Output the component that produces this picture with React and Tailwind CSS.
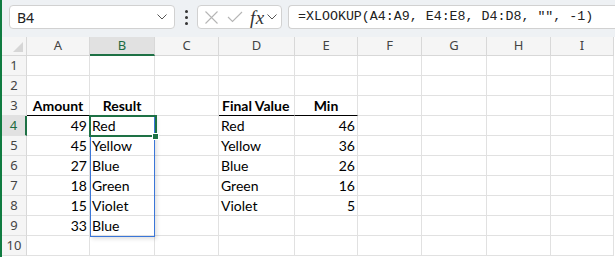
import React from 'react';

const cols = ['A', 'B', 'C', 'D', 'E', 'F', 'G', 'H', 'I'];

// row data keyed by column
const rows = {
  3: { A: 'Amount', B: 'Result', D: 'Final Value', E: 'Min' },
  4: { A: '49', B: 'Red', D: 'Red', E: '46' },
  5: { A: '45', B: 'Yellow', D: 'Yellow', E: '36' },
  6: { A: '27', B: 'Blue', D: 'Blue', E: '26' },
  7: { A: '18', B: 'Green', D: 'Green', E: '16' },
  8: { A: '15', B: 'Violet', D: 'Violet', E: '5' },
  9: { A: '33', B: 'Blue' },
};

const Chevron = ({ className }) => (
  <svg width="10" height="6" viewBox="0 0 10 6" className={className}>
    <path d="M0.5 0.5 L5 5 L9.5 0.5" fill="none" stroke="#555" strokeWidth="1" />
  </svg>
);

const Cell = ({ row, col }) => {
  const value = rows[row]?.[col] ?? '';
  const isHeader = row === 3;
  const isNumber = /^\d+$/.test(value);
  let align = 'justify-start pl-[2px]';
  if (isNumber) align = 'justify-end pr-[2px]';
  if (isHeader && col !== 'D') align = 'justify-center';
  if (isHeader && col === 'D') align = 'justify-start pl-[3px]';
  const underline = isHeader && (col === 'A' || col === 'D' || col === 'E');
  return (
    <div
      className={`h-5 flex items-end pb-[1px] border-r border-b text-[14px] leading-[17px] text-black ${
        underline ? 'border-b-black' : 'border-b-[#e1e1e1]'
      } border-r-[#e1e1e1] ${align} ${isHeader ? 'font-bold' : ''}`}
    >
      {value}
    </div>
  );
};

export default function App() {
  return (
    <div
      className="w-[615px] h-[257px] overflow-hidden flex bg-white"
      style={{ fontFamily: '"Noto Sans", sans-serif' }}
    >
      <div className="w-[2px] shrink-0 bg-[#107c41]" />
      <div className="flex-1 flex flex-col min-w-0">
        {/* formula bar */}
        <div className="h-[37px] shrink-0 bg-[#eef1f4] flex items-start pt-[5px] pl-[7px]">
          <div className="w-[166px] h-[24px] bg-white border border-[#d1d1d1] rounded-[4px] flex items-center justify-between pl-[7px] pr-[7px]">
            <span className="text-[14px] text-[#222]">B4</span>
            <Chevron />
          </div>
          <div className="w-[22px] h-[24px] flex flex-col items-center justify-center gap-[3px]">
            <span className="w-[3px] h-[3px] rounded-full bg-[#333]" />
            <span className="w-[3px] h-[3px] rounded-full bg-[#333]" />
            <span className="w-[3px] h-[3px] rounded-full bg-[#333]" />
          </div>
          <div className="w-[85px] h-[24px] bg-white border border-[#d1d1d1] rounded-[4px] flex items-center pl-[6px]">
            <svg width="15" height="15" viewBox="0 0 15 15">
              <path d="M1.5 1.5 L13.5 13.5 M13.5 1.5 L1.5 13.5" stroke="#b5b5b5" strokeWidth="1.1" fill="none" />
            </svg>
            <svg width="16" height="12" viewBox="0 0 16 12" className="ml-[8px]">
              <path d="M1 6 L5.5 10.5 L15 1" stroke="#b5b5b5" strokeWidth="1.1" fill="none" />
            </svg>
            <span
              className="ml-[7px] text-[19px] italic text-[#333] leading-none tracking-[0.5px]"
              style={{ fontFamily: '"Liberation Serif", serif' }}
            >
              fx
            </span>
            <Chevron className="ml-[2px]" />
          </div>
          <div className="ml-[6px] flex-1 h-[24px] bg-white border border-r-0 border-[#d1d1d1] rounded-l-[4px] flex items-center pl-[9px]">
            <span
              className="text-[13.3px] text-[#222] whitespace-pre"
              style={{ fontFamily: '"Liberation Mono", monospace' }}
            >
              =XLOOKUP(A4:A9, E4:E8, D4:D8, "", -1)
            </span>
          </div>
        </div>

        {/* grid */}
        <div className="relative">
          <div className="grid grid-cols-[25px_63px_65px_64px_76px_63px_64px_65px_64px_63px]">
            <div className="h-[19px] bg-[#f5f5f5] border-r border-b border-[#d8d8d8] relative">
              <svg width="10" height="10" viewBox="0 0 10 10" className="absolute right-[3px] bottom-[3px]">
                <path d="M10 0 L10 10 L0 10 Z" fill="#d6d6d6" />
              </svg>
            </div>
            {cols.map((c) => (
              <div
                key={c}
                className={`h-[19px] flex items-center justify-center text-[13px] border-r ${
                  c === 'B'
                    ? 'bg-[#e1e1e1] text-[#1d6b41] border-b-2 border-b-[#1e7145] border-r-[#d8d8d8]'
                    : 'bg-[#f5f5f5] text-[#444] border-b border-[#d8d8d8]'
                }`}
              >
                {c}
              </div>
            ))}
            {Array.from({ length: 10 }, (_, i) => i + 1).map((r) => (
              <React.Fragment key={r}>
                <div
                  className={`h-5 flex items-center justify-center pt-[1px] text-[13px] border-b border-[#e1e1e1] ${
                    r === 4
                      ? 'bg-[#e1e1e1] text-[#1d6b41] border-r-2 border-r-[#1e7145]'
                      : 'bg-[#f5f5f5] text-[#444] border-r border-r-[#d8d8d8]'
                  }`}
                >
                  {r}
                </div>
                {cols.map((c) => (
                  <div key={c} style={{ fontFamily: 'Lato, "Liberation Sans", sans-serif' }}>
                    <Cell row={r} col={c} />
                  </div>
                ))}
              </React.Fragment>
            ))}
          </div>

          {/* spill range */}
          <div className="absolute left-[88px] top-[79px] w-[65px] h-[121px] border border-[#3a76d8] shadow-[2px_2px_4px_rgba(0,0,0,0.12)] pointer-events-none" />
          {/* active cell */}
          <div className="absolute left-[87px] top-[78px] w-[68px] h-[22px] border-2 border-[#1e7145] pointer-events-none" />
          <div className="absolute left-[150px] top-[96px] w-[7px] h-[7px] bg-[#1e7145] border border-white pointer-events-none" />
        </div>
      </div>
    </div>
  );
}
